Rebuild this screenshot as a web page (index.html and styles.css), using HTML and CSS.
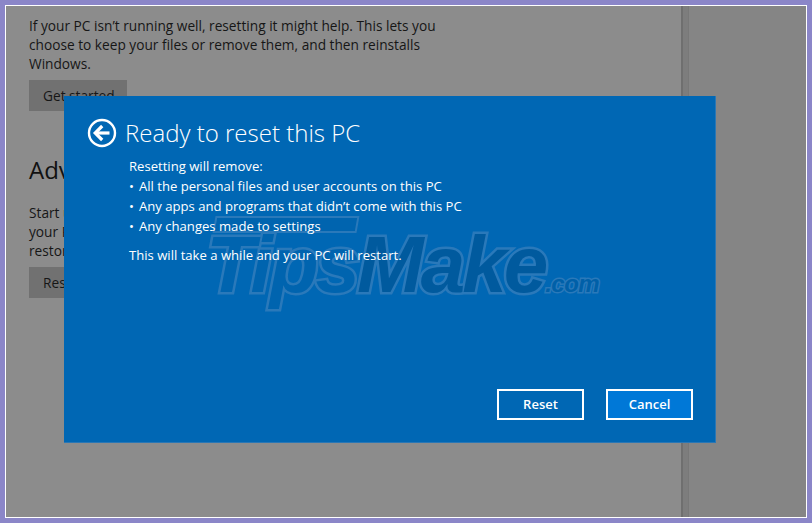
FILE: index.html
```html
<!DOCTYPE html>
<html lang="en">
<head>
<meta charset="utf-8">
<title>Ready to reset this PC</title>
<link rel="stylesheet" href="styles.css">
</head>
<body>
<div class="frame">
  <main class="pane">
    <p class="para">If your PC isn’t running well, resetting it might help. This lets you<br>choose to keep your files or remove them, and then reinstalls<br>Windows.</p>
    <div class="btn">Get started</div>
    <h2 class="head">Advanced startup</h2>
    <p class="para">Start up from a device or disc (such as a USB drive or DVD), change<br>your PC’s firmware settings, change Windows startup settings, or<br>restore Windows from a system image.</p>
    <div class="btn">Restart now</div>
  </main>
  <div class="scroll"></div>
  <div class="side"></div>
  <section class="dialog">
    <div class="mark-bar"></div>
    <div class="mark"><span class="ghost">Tips</span><span class="solid">Make</span><span class="dom">.com</span></div>
    <header class="title-row">
      <svg class="back" viewBox="0 0 30 30" aria-hidden="true">
        <circle cx="15" cy="15" r="13" fill="none" stroke="#fff" stroke-width="2.4"/>
        <path d="M8 15H22.5" fill="none" stroke="#fff" stroke-width="3.2"/>
        <path d="M15.2 8 8.2 15l7 7" fill="none" stroke="#fff" stroke-width="3.2"/>
      </svg>
      <h1 class="title">Ready to reset this PC</h1>
    </header>
    <div class="body">
      <p class="line">Resetting will remove:</p>
      <p class="line"><span class="dot">•</span>All the personal files and user accounts on this PC</p>
      <p class="line"><span class="dot">•</span>Any apps and programs that didn’t come with this PC</p>
      <p class="line"><span class="dot">•</span>Any changes made to settings</p>
      <p class="line gap">This will take a while and your PC will restart.</p>
    </div>
    <footer class="actions">
      <div class="action">Reset</div>
      <div class="action primary">Cancel</div>
    </footer>
  </section>
</div>
</body>
</html>
```
FILE: styles.css
```css
* { box-sizing: border-box; }
html, body { margin: 0; height: 100%; }
body {
  background: #8b86c8;
  padding: 5px;
  font-family: "Open Sans", "Noto Sans", sans-serif;
  overflow: hidden;
}
.frame {
  position: relative;
  display: flex;
  height: 513px;
  border: 1px solid #fff;
  background: #858585;
  overflow: hidden;
}
.pane {
  width: 675px;
  flex: none;
  padding: 10px 0 0 23px;
  background: #8c8c8c;
  color: #161616;
}
.para {
  margin: 0;
  font-size: 13.7px;
  line-height: 19px;
  white-space: nowrap;
}
.btn {
  width: 98px;
  height: 31px;
  margin-top: 7px;
  padding-left: 14px;
  background: #717171;
  font-size: 13.7px;
  line-height: 31px;
  white-space: nowrap;
}
.head {
  margin: 41px 0 15px;
  font-size: 24px;
  font-weight: 400;
  line-height: 36px;
  white-space: nowrap;
  color: #111;
}
.scroll {
  width: 8px;
  flex: none;
  background: #7d7d7d;
  border-left: 2px solid #6f6f6f;
  border-right: 1px solid #787878;
}
.side { flex: 1; }
.dialog {
  position: absolute;
  left: 58px;
  top: 90px;
  width: 652px;
  height: 347px;
  display: flex;
  flex-direction: column;
  background: #0067b4;
  color: #fff;
  border-right: 1px solid #2a77b5;
  border-bottom: 1px solid #2a77b5;
}
.title-row {
  position: relative;
  display: flex;
  align-items: center;
  gap: 8px;
  padding: 22px 0 0 23px;
}
.back { width: 30px; height: 30px; flex: none; }
.title {
  margin: 0;
  font-size: 24px;
  font-weight: 300;
  line-height: 30px;
  white-space: nowrap;
}
.body { position: relative; padding: 8px 0 0 65px; }
.line {
  margin: 0;
  font-size: 13.1px;
  line-height: 20px;
  white-space: nowrap;
}
.dot { display: inline-block; width: 10px; }
.gap { margin-top: 9px; }
.actions {
  position: relative;
  margin-top: auto;
  display: flex;
  justify-content: flex-end;
  gap: 22px;
  padding: 0 22px 22px 0;
}
.action {
  width: 87px;
  height: 31px;
  border: 2px solid #fff;
  text-align: center;
  font-size: 13px;
  font-weight: 600;
  line-height: 27px;
}
.primary { background: #0078d7; }
.mark {
  position: absolute;
  left: 142px;
  top: 124px;
  white-space: nowrap;
  font-family: "Liberation Sans", Arial, sans-serif;
  font-style: italic;
  font-weight: 700;
  font-size: 80px;
  line-height: 90px;
  letter-spacing: -3px;
  -webkit-text-stroke: 5px #2a79ba;
  paint-order: stroke fill;
}
.mark-bar {
  position: absolute;
  left: 150px;
  top: 120px;
  width: 144px;
  height: 17px;
  border: 2.5px solid #2a79ba;
  background: #0064af;
  transform: skewX(-10deg);
}
.ghost { color: #0064af; }
.solid { color: #005a9e; }
.dom {
  color: #0060a8;
  font-size: 24px;
  letter-spacing: -0.5px;
  -webkit-text-stroke-width: 3px;
}
```
